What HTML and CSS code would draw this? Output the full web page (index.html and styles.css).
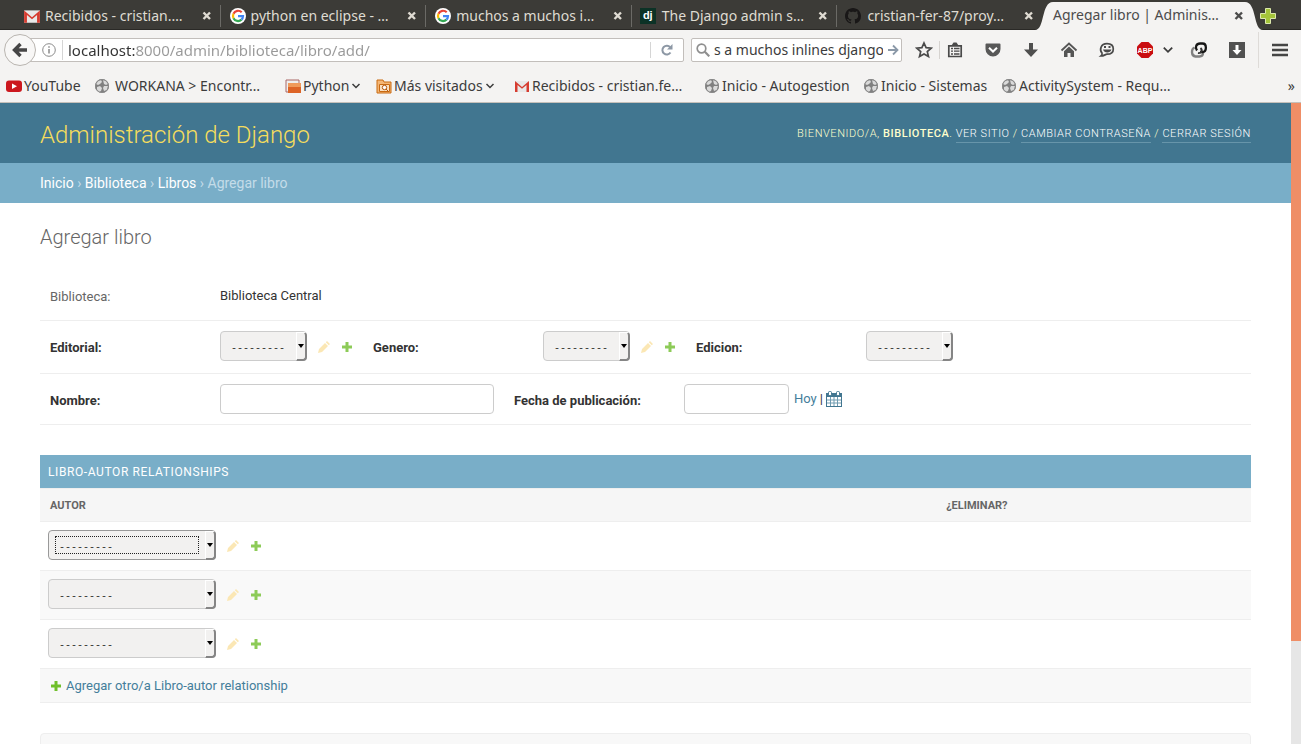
FILE: index.html
```html
<!DOCTYPE html>
<html lang="es">
<head>
<meta charset="utf-8">
<title>Agregar libro | Administración de Django</title>
<link rel="stylesheet" href="styles.css">
</head>
<body>
<svg class="defs" aria-hidden="true">
  <symbol id="close" viewBox="0 0 10 10"><path d="M1.500 1.500l6.500 6.500M8 1.500L1.500 8" stroke="currentColor" stroke-width="2.400"/></symbol>
  <symbol id="google" viewBox="0 0 18 18"><circle cx="9" cy="9" r="8" fill="#fff"/><g fill="none" stroke-width="2.200"><path d="M12.700 5.300A5 5 0 0 0 4.500 6.800" stroke="#ea4335"/><path d="M4.500 6.800a5 5 0 0 0 0 4.400" stroke="#fbbc05"/><path d="M4.500 11.200a5 5 0 0 0 8 1.400" stroke="#34a853"/><path d="M12.500 12.600A5 5 0 0 0 14 9.200H9" stroke="#4285f4"/></g></symbol>
  <symbol id="gmail" viewBox="0 0 16 16"><path d="M1 3h14v11H1z" fill="#e8e8e8"/><path d="M1 14V3l7 6 7-6v11h-2.500V7L8 10.800 3.500 7v7z" fill="#d63c30"/></symbol>
  <symbol id="globe" viewBox="0 0 16 16"><circle cx="8" cy="8" r="7" fill="#808080"/><path d="M2 6l2-3 3-1 1 2-2 2-2 1zM3 9l3-1 2 2-1 3-2 1-2-2zM9 2l3 1 2 3-2 1-2-1zM10 8l4 0-1 4-3 1-1-3z" fill="#dadada"/><circle cx="8" cy="8" r="6.500" fill="none" stroke="#8a8a8a"/></symbol>
  <symbol id="chev" viewBox="0 0 10 10"><path d="M1.500 3L5 6.500 8.500 3" fill="none" stroke="currentColor" stroke-width="1.500"/></symbol>
  <symbol id="pencil" viewBox="0 0 12 12"><path d="M0 12l1-4 6-6 3 3-6 6zM7.800 1.200L9 0l3 3-1.200 1.200z" fill="#fbe7b4"/></symbol>
  <symbol id="plus" viewBox="0 0 12 12"><path d="M4.500 1h3v3.500H11v3H7.500V11h-3V7.500H1v-3h3.500z" fill="currentColor"/></symbol>
  <symbol id="arrow" viewBox="0 0 6 4"><path d="M0 0h6L3 4z"/></symbol>
</svg>

<header class="browser">
  <nav class="tabs" aria-label="Pestañas">
    <div class="tab"><svg class="fav"><use href="#gmail"/></svg><span class="tab-title">Recibidos - cristian.…</span><button class="close" aria-label="Cerrar"><svg><use href="#close"/></svg></button></div>
    <div class="tab"><svg class="fav"><use href="#google"/></svg><span class="tab-title">python en eclipse - …</span><button class="close" aria-label="Cerrar"><svg><use href="#close"/></svg></button></div>
    <div class="tab"><svg class="fav"><use href="#google"/></svg><span class="tab-title">muchos a muchos i…</span><button class="close" aria-label="Cerrar"><svg><use href="#close"/></svg></button></div>
    <div class="tab"><span class="fav dj">dj</span><span class="tab-title">The Django admin s…</span><button class="close" aria-label="Cerrar"><svg><use href="#close"/></svg></button></div>
    <div class="tab last"><svg class="fav" viewBox="0 0 16 16"><path fill="#191717" d="M8 0C3.580 0 0 3.580 0 8c0 3.540 2.290 6.530 5.470 7.590.4.070.55-.17.55-.38 0-.19-.01-.82-.01-1.490-2.010.37-2.530-.49-2.690-.94-.09-.23-.48-.94-.82-1.130-.28-.15-.68-.52-.01-.53.63-.01 1.080.58 1.230.82.72 1.210 1.870.87 2.330.66.07-.52.28-.87.51-1.070-1.780-.2-3.640-.89-3.640-3.950 0-.87.31-1.590.82-2.150-.08-.2-.36-1.020.08-2.120 0 0 .67-.21 2.200.82.64-.18 1.320-.27 2-.27s1.360.09 2 .27c1.530-1.040 2.200-.82 2.200-.82.44 1.100.16 1.920.08 2.120.51.56.82 1.270.82 2.150 0 3.070-1.870 3.750-3.650 3.950.29.25.54.73.54 1.480 0 1.070-.01 1.930-.01 2.200 0 .21.15.46.55.38A8.010 8.010 0 0 0 16 8c0-4.420-3.580-8-8-8z"/></svg><span class="tab-title">cristian-fer-87/proy…</span><button class="close" aria-label="Cerrar"><svg><use href="#close"/></svg></button></div>
    <div class="tab active">
      <svg class="curve" viewBox="0 0 18 28"><path d="M0 28C10 28 6 0 18 0V28z" fill="#f4f3f2"/></svg>
      <span class="tab-title">Agregar libro | Adminis…</span><button class="close" aria-label="Cerrar"><svg><use href="#close"/></svg></button>
      <svg class="curve" viewBox="0 0 18 28"><path d="M18 28C8 28 12 0 0 0V28z" fill="#f4f3f2"/></svg>
    </div>
    <button class="new-tab" aria-label="Nueva pestaña"><svg viewBox="0 0 16 16"><path d="M5.500.5h5v5h5v5h-5v5h-5v-5h-5v-5h5z" fill="#a4c43a" stroke="#dce9ac"/></svg></button>
  </nav>

  <div class="toolbar">
    <button class="back" aria-label="Atrás"><svg viewBox="0 0 16 16"><path d="M8.500 2L2.500 8l6 6M3 8h12" fill="none" stroke="#464646" stroke-width="3.400"/></svg></button>
    <div class="urlbar">
      <svg class="info" viewBox="0 0 14 14"><circle cx="7" cy="7" r="6.300" fill="none" stroke="#8a8a8a"/><path d="M7 3.200v1.500M7 6v4.500" stroke="#777" stroke-width="1.300"/></svg>
      <input class="url" aria-label="Dirección" value="localhost:8000/admin/biblioteca/libro/add/">
      <button class="reload" aria-label="Recargar"><svg viewBox="0 0 14 14"><path d="M10.500 9.500a4.400 4.400 0 1 1-.3-5.200" fill="none" stroke="#8d98a5" stroke-width="2"/><path d="M12.500 1v5.500H7z" fill="#8d98a5"/></svg></button>
    </div>
    <div class="searchbar">
      <svg viewBox="0 0 14 14"><circle cx="5.500" cy="5.500" r="4.300" fill="none" stroke="#8f8f8f" stroke-width="1.700"/><path d="M8.800 8.800l4.500 4.500" stroke="#8f8f8f" stroke-width="2.200"/></svg>
      <input class="query" aria-label="Buscar" value="s a muchos inlines django">
      <svg class="go" viewBox="0 0 12 12"><path d="M1 6h9M6 1.500L10.500 6 6 10.500" fill="none" stroke="#8b99a8" stroke-width="1.800"/></svg>
    </div>
    <div class="tools">
      <button aria-label="Marcador"><svg viewBox="0 0 18 18"><path d="M9 2l2.100 4.700 5.100.5-3.900 3.400 1.200 5L9 13l-4.500 2.600 1.200-5L1.800 7.200l5.100-.5z" fill="none" stroke="#4a4a4a" stroke-width="1.700"/></svg></button>
      <button class="list" aria-label="Marcadores"><svg viewBox="0 0 18 18"><path d="M2.800 4.800h12.400v10.700H2.800z" fill="none" stroke="#4a4a4a" stroke-width="1.700"/><path d="M5.500 4.500L7.500 1.500h3l2 3z" fill="#4a4a4a"/><path d="M5 7.500h2m1 0h5.500M5 10.200h2m1 0h5.500M5 13h2m1 0h5.500" stroke="#4a4a4a" stroke-width="1.300"/></svg></button>
      <button aria-label="Pocket"><svg viewBox="0 0 18 18"><path d="M2.500 2.500h13a1 1 0 0 1 1 1V8a7.500 7.500 0 0 1-15 0V3.500a1 1 0 0 1 1-1z" fill="#585858"/><path d="M5 6.700L9 10.500l4-3.800" fill="none" stroke="#fff" stroke-width="2"/></svg></button>
      <button aria-label="Descargas"><svg viewBox="0 0 18 18"><path d="M7 2h4v6.500h5L9 16 2 8.500h5z" fill="#4f4f4f"/></svg></button>
      <button aria-label="Inicio"><svg viewBox="0 0 18 18"><path d="M1.500 9.500L9 2.500l7.500 7" fill="none" stroke="#555" stroke-width="1.800"/><path d="M9 5.500l5 4.700V16h-3.500v-4h-3v4H4v-5.800z" fill="#555"/></svg></button>
      <button aria-label="Hello"><svg viewBox="0 0 18 18"><path d="M9 2.700c4 0 6.300 2.100 6.300 5.200S13 13.200 9 13.200c-1.500 0-3 1.800-6 1.800 1-.8 1.300-1.800 1-3C1.300 9 2.500 2.700 9 2.700z" fill="none" stroke="#4a4a4a" stroke-width="1.700"/><path d="M5 8.500h8.500c-1 4-7.500 4-8.500 0M6 5h2v2H6zM10.500 5h2v2h-2z" fill="#4a4a4a"/></svg></button>
      <button aria-label="Adblock Plus"><svg viewBox="0 0 18 18"><path d="M5.500 1h7L17 5.500v7L12.500 17h-7L1 12.500v-7z" fill="#c90d10"/><text class="abp" x="9" y="12" text-anchor="middle">ABP</text></svg></button>
      <button class="drop" aria-label="Opciones"><svg><use href="#chev"/></svg></button>
      <button aria-label="Extensión"><svg viewBox="0 0 18 18"><g fill="none" stroke-width="2.300"><path d="M4.500 6.500C1 8 1 15 5.500 15.500h4c2 0 3.500-1.500 3.500-3.500" stroke="#808080"/><path d="M7 9.500C4.500 6 6.500 2.500 10 2.500h2.500c4.500 0 4.500 8.500 0 8.500H10" stroke="#161616"/><path d="M10.500 7c3 3 0 5.500-2.500 5" stroke="#333" stroke-width="1.800"/></g></svg></button>
      <button aria-label="Descargar vídeo"><svg viewBox="0 0 18 18"><path d="M1 1h16v16H1z" fill="#515151"/><path d="M7.500 4h3v5h3L9 14 4.500 9h3z" fill="#fff"/></svg></button>
      <button class="menu" aria-label="Menú"><svg viewBox="0 0 18 18"><path d="M1 4h16M1 9h16M1 14h16" stroke="#454545" stroke-width="2.500"/></svg></button>
    </div>
  </div>

  <nav class="bookmarks" aria-label="Barra de marcadores">
    <a href="#"><svg viewBox="0 0 16 16"><rect y="2.500" width="16" height="11.500" rx="3" fill="#cc181e"/><path d="M6 5.500v5.500l5-2.700z" fill="#fff"/></svg>YouTube</a>
    <a class="wide" href="#"><svg><use href="#globe"/></svg>WORKANA &gt; Encontr…</a>
    <a href="#"><svg viewBox="0 0 16 16"><path d="M1 2h13v12H1z" fill="#eee" stroke="#a66"/><path d="M3 5h13v10H3z" fill="#dd6427"/><path d="M3 5h13v4H3z" fill="#ef9a5b"/></svg>Python<svg class="mini"><use href="#chev"/></svg></a>
    <a href="#"><svg viewBox="0 0 16 16"><path d="M1 2h6l1 2h7v11H1z" fill="#f4b675" stroke="#c96a12"/><path d="M3.500 6.500h10v7h-10z" fill="#f9dfc0" stroke="#c96a12"/><circle cx="8.500" cy="9.500" r="2.200" fill="#fff" stroke="#b3560c"/><path d="M10 11l2.500 2.500" stroke="#b3560c"/></svg>Más visitados<svg class="mini"><use href="#chev"/></svg></a>
    <a href="#"><svg><use href="#gmail"/></svg>Recibidos - cristian.fe…</a>
    <a href="#"><svg><use href="#globe"/></svg>Inicio - Autogestion</a>
    <a href="#"><svg><use href="#globe"/></svg>Inicio - Sistemas</a>
    <a href="#"><svg><use href="#globe"/></svg>ActivitySystem - Requ…</a>
    <button class="more" aria-label="Más marcadores">»</button>
  </nav>
</header>

<div class="viewport">
  <div class="page">
    <header class="site-header">
      <a class="brand" href="#">Administración de Django</a>
      <div class="user-tools">Bienvenido/a, <strong>Biblioteca</strong>. <a href="#">Ver sitio</a> / <a href="#">Cambiar contraseña</a> / <a href="#">Cerrar sesión</a></div>
    </header>
    <nav class="breadcrumbs"><a href="#">Inicio</a> › <a href="#">Biblioteca</a> › <a href="#">Libros</a> › Agregar libro</nav>
    <main class="content">
      <h1>Agregar libro</h1>
      <form>
        <div class="form-row">
          <div class="field"><span class="label plain">Biblioteca:</span><span class="readonly">Biblioteca Central</span></div>
        </div>
        <div class="form-row related">
          <div class="field"><label class="label" for="editorial">Editorial:</label><span class="select"><select id="editorial"><option>---------</option></select><i><svg><use href="#arrow"/></svg></i></span><svg class="act"><use href="#pencil"/></svg><svg class="act add"><use href="#plus"/></svg></div>
          <div class="field"><label class="label" for="genero">Genero:</label><span class="select"><select id="genero"><option>---------</option></select><i><svg><use href="#arrow"/></svg></i></span><svg class="act"><use href="#pencil"/></svg><svg class="act add"><use href="#plus"/></svg></div>
          <div class="field"><label class="label" for="edicion">Edicion:</label><span class="select"><select id="edicion"><option>---------</option></select><i><svg><use href="#arrow"/></svg></i></span></div>
        </div>
        <div class="form-row">
          <div class="field"><label class="label" for="nombre">Nombre:</label><input class="text name" id="nombre" type="text"></div>
          <div class="field"><label class="label" for="fecha">Fecha de publicación:</label><input class="text date" id="fecha" type="text"><span class="shortcuts"><a href="#">Hoy</a> | <a href="#" aria-label="Calendario"><svg viewBox="0 0 16 16"><path d="M0 2h16v14H0z" fill="#417690"/><path d="M1 6h14v9H1z" fill="#fff"/><path d="M1 9h14M1 12h14M4.500 6v9M8 6v9M11.500 6v9" stroke="#6f9bb0"/><rect x="2.500" y=".5" width="3" height="4" rx="1" fill="#fff" stroke="#417690"/><rect x="10.500" y=".5" width="3" height="4" rx="1" fill="#fff" stroke="#417690"/></svg></a></span></div>
        </div>

        <section class="inline">
          <h2>Libro-autor relationships</h2>
          <table>
            <thead><tr><th class="author">Autor</th><th>¿Eliminar?</th></tr></thead>
            <tbody>
              <tr><td><div class="cell"><span class="select long focused"><select aria-label="Autor 1"><option>---------</option></select><i><svg><use href="#arrow"/></svg></i></span><svg class="act"><use href="#pencil"/></svg><svg class="act add"><use href="#plus"/></svg></div></td><td></td></tr>
              <tr class="alt"><td><div class="cell"><span class="select long"><select aria-label="Autor 2"><option>---------</option></select><i><svg><use href="#arrow"/></svg></i></span><svg class="act"><use href="#pencil"/></svg><svg class="act add"><use href="#plus"/></svg></div></td><td></td></tr>
              <tr><td><div class="cell"><span class="select long"><select aria-label="Autor 3"><option>---------</option></select><i><svg><use href="#arrow"/></svg></i></span><svg class="act"><use href="#pencil"/></svg><svg class="act add"><use href="#plus"/></svg></div></td><td></td></tr>
            </tbody>
          </table>
          <div class="add-row"><a href="#"><svg><use href="#plus"/></svg>Agregar otro/a Libro-autor relationship</a></div>
        </section>
        <div class="submit-row"></div>
      </form>
    </main>
  </div>
  <div class="scrollbar"><div class="thumb"></div></div>
</div>
</body>
</html>
```
FILE: styles.css
```css
* { box-sizing: border-box; }
body {
  margin: 0;
  height: 100vh;
  display: flex;
  flex-direction: column;
  overflow: hidden;
  background: #fff;
  font: 13px/16px Roboto, "Liberation Sans", sans-serif;
  color: #333;
}
a { color: #447e9b; text-decoration: none; }
button { margin: 0; padding: 0; border: 0; background: none; font: inherit; color: inherit; display: flex; align-items: center; justify-content: center; }
input { font: inherit; color: inherit; min-width: 0; }
svg { display: block; flex: none; }
.defs { display: none; }

/* Browser window */
.browser {
  flex: none;
  background: #f4f3f2;
  border-bottom: 1px solid #c5c0ba;
  color: #3c3c3c;
  font: 14px/20px "Noto Sans", sans-serif;
}
.tabs {
  display: flex;
  height: 30px;
  padding: 0 23px 0 15px;
  background: #3c3b37;
  border-bottom: 1px solid #2a2926;
  color: #dfdbd2;
}
.tab {
  flex: 1 1 0;
  min-width: 0;
  display: flex;
  align-items: center;
  padding: 2px 8px 0 8px;
  background: linear-gradient(#6b6a66, #6b6a66) right 5px / 1px 22px no-repeat;
}
.tab.last { background: none; }
.fav { width: 18px; height: 18px; margin-right: 4px; flex: none; }
.last .fav, .dj { width: 16px; height: 16px; margin-right: 6px; }
.dj { background: #0c3226; color: #fff; font: bold 11px/15px "Liberation Sans", sans-serif; text-align: center; }
.tab-title { flex: 1; white-space: nowrap; }
.close { width: 12px; height: 12px; }
.close svg { width: 10px; height: 10px; }
.tab.active {
  flex: none;
  width: 228px;
  height: 30px;
  margin-left: -8px;
  padding: 2px 0 0;
  background: none;
  color: #4c4c4c;
}
.active .tab-title, .active .close { height: 28px; line-height: 26px; background: #f4f3f2; }
.curve { width: 18px; height: 28px; }
.new-tab { width: 20px; margin-left: -5px; padding-top: 2px; }
.new-tab svg { width: 16px; height: 16px; }

.toolbar { display: flex; align-items: center; height: 40px; padding-left: 4px; }
.back { z-index: 1; flex: none; width: 32px; height: 32px; border: 1px solid #b9b5b0; border-radius: 50%; background: #f8f7f6; }
.back svg { width: 16px; height: 16px; }
.urlbar, .searchbar { display: flex; align-items: center; height: 24px; background: #fff; border: 1px solid #c2bebb; border-radius: 2px; }
.urlbar { flex: 1; margin-left: -10px; padding-left: 15px; }
.info { width: 14px; height: 14px; }
.url { flex: 1; height: 20px; margin-left: 6px; padding: 0 5px; border: 0; outline: 0; font-size: 15px;
  color: transparent; background: linear-gradient(90deg, #333 72px, #999 72px); background-clip: text; }
.info + .url { border-left: 1px solid #d5d5d5; }
.reload { width: 33px; height: 16px; border-left: 1px solid #d5d5d5; }
.reload svg { width: 14px; height: 14px; }
.searchbar { width: 211px; margin-left: 7px; padding: 0 2px 0 4px; gap: 4px; }
.searchbar svg { width: 14px; height: 14px; }
.searchbar .go { width: 12px; height: 12px; }
.query { flex: 1; height: 20px; padding: 0; border: 0; outline: 0; background: none; text-align: right; }
.tools { display: flex; align-items: center; margin-left: 13px; gap: 20px; padding-right: 12px; }
.tools svg { width: 18px; height: 18px; }
.tools .list { margin-left: -14px; padding-left: 6px; border-left: 1px solid #d6d3d0; }
.tools .drop { margin: 0 -4px 0 -12px; }
.drop svg { width: 12px; height: 12px; }
.tools .menu { height: 36px; margin-left: -8px; padding-left: 12px; border-left: 1px solid #dedbd8; }
.abp { font: bold 7px "Liberation Sans", sans-serif; fill: #fff; }

.bookmarks {
  display: grid;
  grid-template-columns: 88px 191px 91px 138px 190px 159px 138px 1fr auto;
  align-items: center;
  height: 32px;
  padding: 0 6px;
}
.bookmarks a { display: flex; align-items: center; gap: 2px; color: inherit; white-space: nowrap; }
.bookmarks svg { width: 16px; height: 16px; }
.bookmarks .wide { gap: 5px; }
.bookmarks .mini { width: 10px; height: 10px; }

/* Admin page */
.viewport { flex: 1; min-height: 0; display: flex; }
.page { flex: 1; min-width: 0; overflow: hidden; }
.scrollbar { width: 10px; background: #e6e6e6; }
.thumb { height: 84%; background: #ef8e66; }
.site-header { display: flex; justify-content: space-between; align-items: center; height: 60px; padding: 2px 40px 0; background: #417690; color: #ffc; }
.brand { font-size: 24px; line-height: 28px; font-weight: 300; color: #f5dd5d; padding-top: 2px; }
.user-tools { font-size: 11px; font-weight: 300; letter-spacing: 0.05em; text-transform: uppercase; }
.user-tools strong { font-weight: 500; }
.user-tools a { display: inline-block; color: #fff; border-bottom: 1px solid #6795aa; }
.breadcrumbs { padding: 10px 40px; line-height: 20px; font-size: 14px; background: #79aec8; color: #c4dce8; }
.breadcrumbs a { color: #fff; }
.content { padding: 20px 40px; }
h1 { margin: 0 0 19px; font-size: 20px; line-height: 28px; font-weight: 300; color: #666; }
.form-row { display: flex; gap: 20px; padding: 10px; border-bottom: 1px solid #eee; }
.form-row.related { padding-bottom: 12px; }
.field { display: flex; align-items: center; min-height: 30px; }
.label { width: 170px; font-weight: 700; padding-top: 4px; }
.plain { font-weight: 400; color: #666; }
.readonly { padding-top: 2px; }
.text { height: 30px; padding: 5px 6px; border: 1px solid #ccc; border-radius: 4px; }
.name { width: 274px; }
.date { width: 105px; }
.shortcuts { display: flex; gap: 3px; padding-left: 5px; line-height: 16px; }
.shortcuts svg { width: 16px; height: 16px; }
.select { position: relative; display: flex; width: 87px; height: 30px; }
.select.long { width: 168px; }
select {
  appearance: none;
  flex: 1;
  min-width: 0;
  padding: 4px 0 0 10px;
  border: 1px solid #ccc;
  border-radius: 4px;
  background: #f2f1f0;
  color: #333;
  font: 10px "Liberation Mono", monospace;
}
.focused select { border-color: #999; }
.focused::after { content: ""; position: absolute; inset: 6px 17px 6px 7px; border: 1px dotted #222; pointer-events: none; }
.select i {
  position: absolute;
  top: 1px;
  right: 0;
  bottom: 0;
  width: 11px;
  display: flex;
  align-items: center;
  justify-content: center;
  background: #f2f1f0;
  border: solid;
  border-width: 1px 2px 2px 1px;
  border-color: #fff #858585 #858585 #fff;
  border-radius: 0 4px 4px 0;
  pointer-events: none;
}
.select i svg { width: 6px; height: 4px; }
.act { width: 12px; height: 12px; margin: 2px 0 0 11px; }
.add { color: #8dcb58; }

.inline { margin-top: 30px; }
h2 { margin: 0; padding: 9px 8px 7px; font-size: 12px; line-height: 17px; font-weight: 400; letter-spacing: 0.05em; text-transform: uppercase; color: #fff; background: #79aec8; }
table { width: 100%; border-collapse: separate; border-spacing: 0; table-layout: fixed; }
th { padding: 9px 10px 7px; border: solid #eee; border-width: 1px 0; background: #f6f6f6; text-align: left; text-transform: uppercase; font-size: 11px; line-height: 16px; font-weight: 700; color: #666; }
.author { width: 74%; }
td { padding: 8px 8px 10px; border-bottom: 1px solid #eee; }
.alt td { background: #f9f9f9; }
.cell { display: flex; align-items: center; }
.add-row { padding: 9px 10px 8px; background: #f8f8f8; border-bottom: 1px solid #eee; }
.add-row a { display: flex; align-items: center; gap: 4px; }
.add-row svg { width: 12px; height: 12px; color: #70bf2b; }
.submit-row { height: 60px; margin-top: 30px; border: 1px solid #eee; border-radius: 4px; background: #f8f8f8; }
```
